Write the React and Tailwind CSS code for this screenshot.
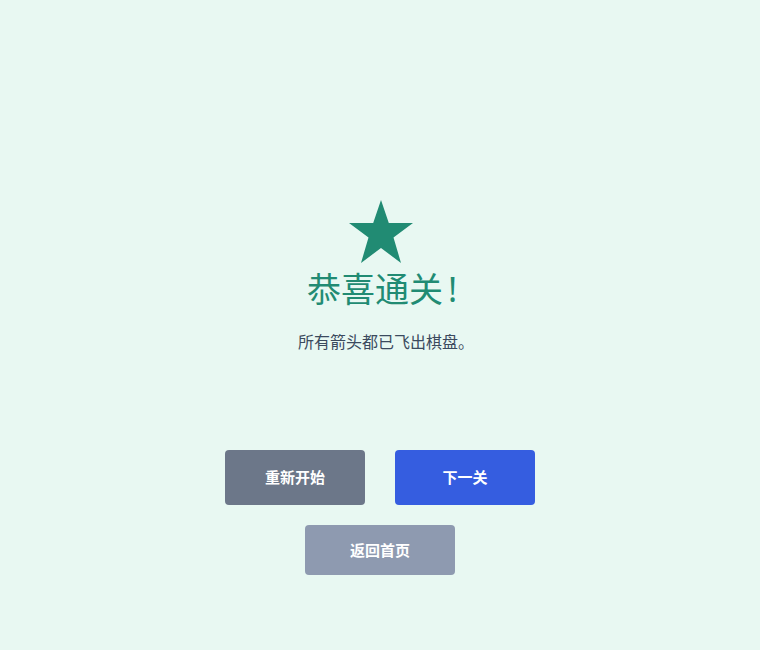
export default function App() {
  return (
    <div
      className="min-h-screen w-full bg-[#e8f8f2] flex flex-col items-center pt-[200px]"
      style={{ fontFamily: '"Noto Sans", "Noto Sans CJK SC", sans-serif' }}
    >
      <svg width="66" height="64" viewBox="0 0 66 64" className="ml-[1px]">
        <polygon
          points="33,0 40.8,23 65,23 45.5,37.5 53,63 33,48 13,63 20.5,37.5 1,23 25.2,23"
          fill="#218b73"
        />
      </svg>
      <h1 className="mt-[2px] text-[34px] leading-[46px] font-normal text-[#218b73] ml-[4px]">
        恭喜通关<span className="ml-[5px]">!</span>
      </h1>
      <p className="mt-[18px] ml-[12px] text-[16px] leading-[24px] text-[#3b4a5e]">
        所有箭头都已飞出棋盘。
      </p>
      <div className="mt-[96px] flex gap-[30px]">
        <button className="w-[140px] h-[55px] rounded-[4px] bg-[#6c7789] text-white text-[15px] font-semibold">
          重新开始
        </button>
        <button className="w-[140px] h-[55px] rounded-[4px] bg-[#355de0] text-white text-[15px] font-semibold">
          下一关
        </button>
      </div>
      <button className="mt-[20px] w-[150px] h-[50px] rounded-[4px] bg-[#8e9ab0] text-white text-[15px] font-semibold">
        返回首页
      </button>
    </div>
  );
}
